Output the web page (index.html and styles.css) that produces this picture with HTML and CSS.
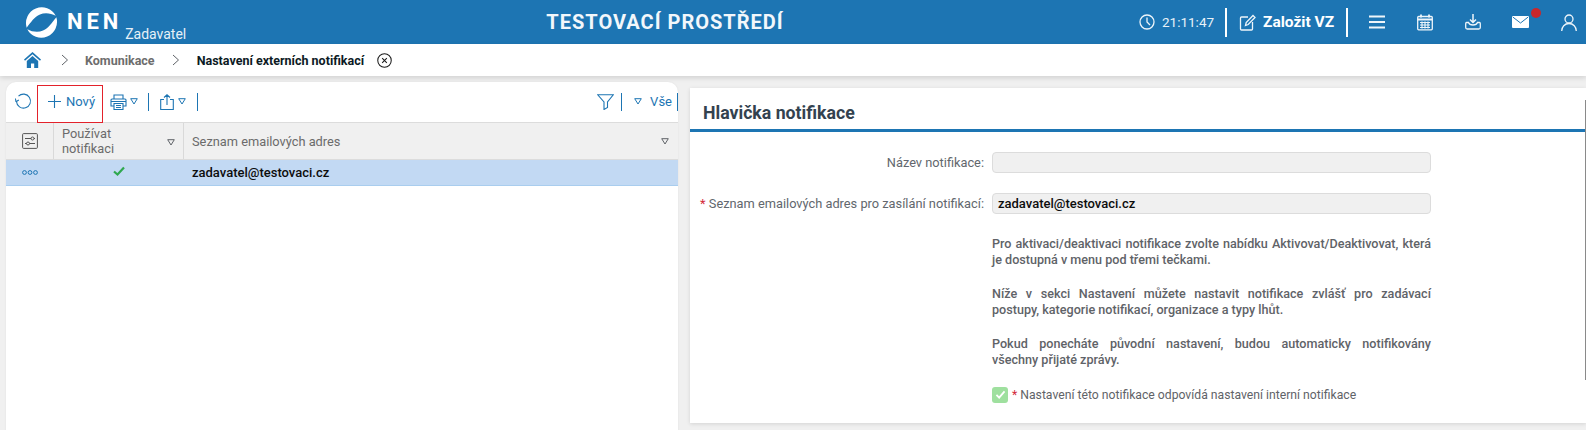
FILE: index.html
```html
<!DOCTYPE html>
<html lang="cs">
<head>
<meta charset="utf-8">
<title>NEN</title>
<link rel="stylesheet" href="styles.css">
</head>
<body>
<header class="top">
  <div class="brand">
    <svg class="logo" viewBox="0 0 32 32"><path id="sw" d="M1.600 21A15.300 15.300 0 0 1 29.800 9.500C25 6.800 19 6.300 14.500 8.200 9 10.500 6 15.500 1.600 21z" fill="#fff"/><path d="M1.600 21A15.300 15.300 0 0 1 29.800 9.500C25 6.800 19 6.300 14.500 8.200 9 10.500 6 15.500 1.600 21z" fill="#fff" transform="rotate(180 16 16)"/></svg>
    <span class="nen">NEN</span>
    <span class="role">Zadavatel</span>
  </div>
  <div class="env">TESTOVACÍ PROSTŘEDÍ</div>
  <div class="tools">
    <svg class="ic clock" viewBox="0 0 16 16"><circle cx="8" cy="8" r="7"/><path d="M8 3.500V8l3 3"/></svg>
    <span class="time">21:11:47</span>
    <i class="vsep first"></i>
    <svg class="ic edit" viewBox="0 0 17 17"><path d="M9 3H2.500A1 1 0 0 0 1.500 4v11a1 1 0 0 0 1 1h10a1 1 0 0 0 1-1V8"/><path d="M6.500 11.500l.7-3L14 1.500l2 2-6.800 7z"/></svg>
    <span class="create">Založit VZ</span>
    <i class="vsep second"></i>
    <svg class="ic burger" viewBox="0 0 16 14"><path d="M0 1.500h16M0 7h16M0 12.500h16" stroke-width="2"/></svg>
    <svg class="ic cal" viewBox="0 0 16 16"><path d="M4 0v3M12 0v3" stroke-width="1.800"/><rect x=".7" y="2" width="14.600" height="13.300" rx="1"/><path d="M.7 5h14.600" stroke-width="2"/><path d="M3 8h10M3 10.500h10M3 13h10M5 7v7M8 7v7M11 7v7" stroke-width="1.200"/></svg>
    <svg class="ic dl" viewBox="0 0 16 16"><path d="M8 0v8.500M5 5.500l3 3 3-3" stroke-width="1.500"/><path d="M3.500 8.500H1.500C1 8.500.7 9 .7 10v3.500c0 1 .5 1.500 1.500 1.500h11.600c1 0 1.500-.5 1.500-1.500V10c0-1-.3-1.500-.8-1.500h-2c-.5 1.500-2 2.500-4.500 2.500s-4-1-4.500-2.500z" stroke-width="1.300"/></svg>
    <span class="mail">
      <svg class="mailic" viewBox="0 0 17 12"><path d="M1 0h15a1 1 0 0 1 1 1v10a1 1 0 0 1-1 1H1a1 1 0 0 1-1-1V1a1 1 0 0 1 1-1z" fill="#fff"/><path d="M.8 1l7.700 6 7.700-6" fill="none" stroke="#1d75b3" stroke-width="1"/></svg>
      <b class="dot"></b>
    </span>
    <svg class="ic user" viewBox="0 0 16 17"><circle cx="8" cy="5" r="4"/><path d="M.7 17c0-4 3-7.500 7.300-7.500S15.300 13 15.300 17"/></svg>
  </div>
</header>

<nav class="crumbs">
  <svg class="home" viewBox="0 0 17 16"><path d="M8.500 0L0 7.500l1 1.200 7.500-6.500 7.500 6.500 1-1.200z" fill="#1d75b3"/><path d="M2.800 9l5.700-5 5.700 5v7h-4v-4.500H7V16H2.800z" fill="#1d75b3"/></svg>
  <svg class="chev" viewBox="0 0 8 12"><path d="M1 1l5.500 5L1 11"/></svg>
  <span class="crumb">Komunikace</span>
  <svg class="chev two" viewBox="0 0 8 12"><path d="M1 1l5.500 5L1 11"/></svg>
  <span class="crumb cur">Nastavení externích notifikací</span>
  <svg class="closex" viewBox="0 0 16 16"><circle cx="8" cy="8" r="7.200"/><path d="M5.500 5.500l5 5M10.500 5.500l-5 5"/></svg>
</nav>

<main class="content">
  <section class="list">
    <div class="bar">
      <svg class="bi refresh" viewBox="0 0 17 17"><path d="M3.500 3.200A7 7 0 1 1 1.500 8.500"/><path d="M1 8.800l2.800-1.800M1 8.800l-.6-3.300" /></svg>
      <span class="new"><svg class="plus" viewBox="0 0 13 13"><path d="M6.500 0v13M0 6.500h13"/></svg>Nový</span>
      <i class="bsep"></i>
      <svg class="bi print" viewBox="0 0 17 16"><path d="M4 5V1h9v4M4 12H1V6a1 1 0 0 1 1-1h13a1 1 0 0 1 1 1v6h-3"/><path d="M4 9.500h9v6H4zM6 11.500h5M6 13.500h5M1 7.500h15"/></svg>
      <svg class="tri t1" viewBox="0 0 8 7"><path d="M.7.700h6.600L4 6z"/></svg>
      <i class="bsep s2"></i>
      <svg class="bi share" viewBox="0 0 14 16"><path d="M4 5.500H.7v10h12.600v-10H10M7 11V.8M4 3.500L7 .8l3 2.700"/></svg>
      <svg class="tri t2" viewBox="0 0 8 7"><path d="M.7.700h6.600L4 6z"/></svg>
      <i class="bsep s3"></i>
      <span class="grow"></span>
      <svg class="funnel" viewBox="0 0 17 16"><path d="M.7.800h15.600L10.500 8v5.500L7 15.500V8z"/></svg>
      <i class="bsep s4"></i>
      <svg class="tri t3" viewBox="0 0 8 7"><path d="M.7.700h6.600L4 6z"/></svg>
      <span class="all">Vše</span>
      <i class="bsep s5"></i>
    </div>
    <div class="highlight"></div>
    <div class="thead">
      <div class="c0"><svg class="cfg" viewBox="0 0 16 16"><rect x=".6" y=".6" width="14.800" height="14.800" rx="1"/><path d="M3 5.500h10M3 10.500h10"/><circle cx="10.500" cy="5.500" r="1.500" fill="#f0f0f0"/><circle cx="6" cy="10.500" r="1.500" fill="#f0f0f0"/></svg></div>
      <div class="c1"><span>Používat<br>notifikaci</span><svg class="tri sort" viewBox="0 0 8 7"><path d="M.7.700h6.600L4 6z"/></svg></div>
      <div class="c2"><span>Seznam emailových adres</span><svg class="tri sort" viewBox="0 0 8 7"><path d="M.7.700h6.600L4 6z"/></svg></div>
    </div>
    <div class="row">
      <div class="c0"><svg class="dots" viewBox="0 0 16 5"><circle cx="2.500" cy="2.500" r="1.900"/><circle cx="8" cy="2.500" r="1.900"/><circle cx="13.500" cy="2.500" r="1.900"/></svg></div>
      <div class="c1 mid"><svg class="tick" viewBox="0 0 12 10"><path d="M1 5.500l3.500 3L11 1.500" /></svg></div>
      <div class="c2 mailcell">zadavatel@testovaci.cz</div>
    </div>
  </section>

  <section class="detail">
    <h2 class="title">Hlavička notifikace</h2>
    <div class="form">
      <div class="field">
        <label class="lbl">Název notifikace:</label>
        <div class="input"></div>
      </div>
      <div class="field f2">
        <label class="lbl"><em>*</em> Seznam emailových adres pro zasílání notifikací:</label>
        <div class="input val">zadavatel@testovaci.cz</div>
      </div>
      <div class="notes">
        <p><span class="ln">Pro aktivaci/deaktivaci notifikace zvolte nabídku Aktivovat/Deaktivovat, která</span> je dostupná v menu pod třemi tečkami.</p>
        <p><span class="ln">Níže v sekci Nastavení můžete nastavit notifikace zvlášť pro zadávací</span> postupy, kategorie notifikací, organizace a typy lhůt.</p>
        <p><span class="ln">Pokud ponecháte původní nastavení, budou automaticky notifikovány</span> všechny přijaté zprávy.</p>
      </div>
      <div class="check">
        <span class="box"><svg viewBox="0 0 12 10"><path d="M1.500 5.500l3 3 6-7"/></svg></span>
        <span class="cl"><em>*</em> Nastavení této notifikace odpovídá nastavení interní notifikace</span>
      </div>
    </div>
  </section>
  <div class="scroll"></div>
</main>
</body>
</html>
```
FILE: styles.css
```css
* { box-sizing: border-box; }
html, body { margin: 0; height: 430px; overflow: hidden; }
body { background: #f0f0f0; font-family: Roboto, "Liberation Sans", sans-serif; font-size: 13px; color: #5f6368; }
svg { display: block; flex: none; }

.top { height: 44px; background: #1d75b3; color: #fff; display: flex; align-items: center; position: relative; }
.brand { display: flex; align-items: flex-start; padding-left: 25px; width: 400px; height: 44px; }
.logo { width: 33px; height: 33px; margin-top: 6px; }
.nen { font-size: 22px; font-weight: 700; letter-spacing: 3.900px; margin: 9px 0 0 9px; line-height: 26px; }
.role { font-size: 14px; margin: 26px 0 0 3px; line-height: 16px; color: #e6f0f7; }
.env { flex: 1; text-align: center; font-size: 20px; font-weight: 700; letter-spacing: 1px; padding-right: 209px; color: #f2f7fb; white-space: nowrap; }
.tools { display: flex; align-items: center; height: 44px; width: 447px; flex: none; }
.ic { fill: none; stroke: #eef5fa; stroke-width: 1.300; }
.clock { width: 16px; height: 16px; }
.time { font-size: 13.500px; margin-left: 7px; width: 51px; color: #e8f1f8; }
.vsep { width: 2px; height: 29px; background: #fff; }
.vsep.first { margin-left: 12px; }
.edit { width: 17px; height: 17px; margin-left: 12px; }
.create { font-size: 15.500px; font-weight: 700; margin-left: 7px; width: 73px; white-space: nowrap; }
.vsep.second { margin-left: 10px; }
.burger { width: 16px; height: 14px; margin-left: 21px; }
.cal { width: 16px; height: 17px; margin-left: 32px; }
.dl { width: 16px; height: 16px; margin-left: 32px; }
.mail { position: relative; margin-left: 31px; width: 18px; }
.mailic { width: 17px; height: 12px; }
.dot { position: absolute; left: 19px; top: -8px; width: 10px; height: 10px; border-radius: 50%; background: #c9272b; }
.user { width: 16px; height: 17px; margin-left: 31px; }

.crumbs { height: 32px; background: #fff; display: flex; align-items: center; box-shadow: 0 2px 5px rgba(0,0,0,.13); position: relative; padding-left: 24px; }
.home { width: 17px; height: 16px; }
.chev { width: 8px; height: 12px; fill: none; stroke: #5f6368; stroke-width: 1; margin-left: 20px; }
.chev.two { margin-left: 17px; }
.crumb { font-weight: 700; font-size: 12.500px; color: #6d6d6d; margin-left: 16px; }
.crumb.cur { color: #0c1a24; margin-left: 17px; }
.closex { width: 15px; height: 15px; fill: none; stroke: #1a1a1a; stroke-width: 1.100; margin-left: 13px; }

.content { display: flex; align-items: flex-start; height: 354px; padding: 6px 0 0 6px; position: relative; }
.list { width: 672px; height: 360px; background: #fff; border-radius: 10px 10px 0 0; position: relative; flex: none; box-shadow: 0 0 2px rgba(0,0,0,.08); }
.bar { height: 40px; display: flex; align-items: center; color: #1d75b3; font-size: 13px; padding-bottom: 1px; }
.bi { fill: none; stroke: #1d75b3; stroke-width: 1.100; }
.refresh { width: 17px; height: 17px; margin-left: 9px; }
.new { display: flex; align-items: center; margin-left: 16px; width: 53px; }
.plus { width: 13px; height: 13px; fill: none; stroke: #1d75b3; stroke-width: 1.100; margin-right: 5px; }
.bsep { width: 1px; height: 18px; background: #1d75b3; margin-left: 1px; }
.print { width: 17px; height: 16px; margin-left: 7px; }
.tri { width: 8px; height: 7px; fill: none; stroke: #1d75b3; stroke-width: 1; }
.t1 { margin-left: 3px; }
.s2 { margin-left: 10px; }
.share { width: 14px; height: 16px; margin-left: 11px; }
.t2 { margin-left: 4px; }
.s3 { margin-left: 11px; }
.grow { flex: 1; }
.funnel { width: 17px; height: 16px; fill: none; stroke: #1d75b3; stroke-width: 1.100; }
.s4 { margin-left: 7px; }
.t3 { margin-left: 12px; }
.all { margin-left: 8px; }
.s5 { margin-left: 5px; margin-right: 0; }

.highlight { position: absolute; left: 31px; top: 3px; width: 66px; height: 38px; border: 1px solid #e3222b; pointer-events: none; }

.thead, .row { display: grid; grid-template-columns: 48px 130px 1fr; }
.thead { height: 38px; background: #f0f0f0; border-top: 1px solid #dcdcdc; border-bottom: 1px solid #dcdcdc; font-size: 12.800px; line-height: 15px; color: #6b6b6b; }
.thead > div { display: flex; align-items: center; }
.thead .c0 { justify-content: center; border-right: 1px solid #d9d9d9; }
.thead .c1 { border-right: 1px solid #d9d9d9; padding: 0 8px; justify-content: space-between; }
.thead .c2 { padding: 0 9px 0 8px; justify-content: space-between; }
.cfg { width: 16px; height: 16px; fill: none; stroke: #555; stroke-width: 1; }
.sort { stroke: #5f6368; }
.thead .c1 .sort { margin-top: 2px; }
.row { height: 26px; background: #c2d9f3; border-bottom: 1px solid #a9cdee; align-items: center; }
.row .c0 { display: flex; justify-content: center; }
.dots { width: 16px; height: 5px; fill: none; stroke: #1d75b3; stroke-width: 1; }
.mid { display: flex; justify-content: center; padding-bottom: 4px; }
.tick { width: 12px; height: 10px; fill: none; stroke: #2fa84f; stroke-width: 2.200; }
.mailcell { padding-left: 8px; color: #0d0d0d; font-size: 13px; font-weight: 500; }

.detail { flex: 1; margin: 6px 0 0 12px; height: 335px; background: #fff; box-shadow: 0 1px 4px rgba(0,0,0,.12); }
.title { margin: 0; height: 44px; padding: 13px 0 0 13px; font-size: 17.700px; line-height: 24px; font-weight: 700; color: #33424f; border-bottom: 3px solid #1d75b3; }
.form { padding: 20px 0 0 0; }
.field { display: grid; grid-template-columns: 294px 439px; column-gap: 8px; align-items: center; height: 21px; }
.f2 { margin-top: 20px; }
.lbl { text-align: right; white-space: nowrap; color: #62676d; font-size: 12.800px; }
em { color: #d32a3a; font-style: normal; }
.input { height: 21px; border: 1px solid #dcdcdc; border-radius: 4px; background: #f0f0f0; }
.val { padding-left: 5px; line-height: 19px; color: #0d0d0d; font-weight: 500; font-size: 13px; }
.notes { margin: 22px 0 0 302px; width: 439px; font-weight: 500; font-size: 12.600px; line-height: 16px; color: #5f6368; }
.notes p { margin: 0 0 18px; }
.ln { display: block; text-align: justify; text-align-last: justify; }
.check { display: flex; align-items: center; margin: 0 0 0 302px; height: 17px; }
.box { width: 16px; height: 16px; border-radius: 3px; background: #9fe09f; display: flex; align-items: center; justify-content: center; }
.box svg { width: 11px; height: 9px; fill: none; stroke: #fff; stroke-width: 2; }
.cl { margin-left: 4px; color: #5f6368; font-size: 12.200px; }
.scroll { position: absolute; right: 0; top: 24px; width: 1px; height: 280px; background: #8a8a8a; }
```
